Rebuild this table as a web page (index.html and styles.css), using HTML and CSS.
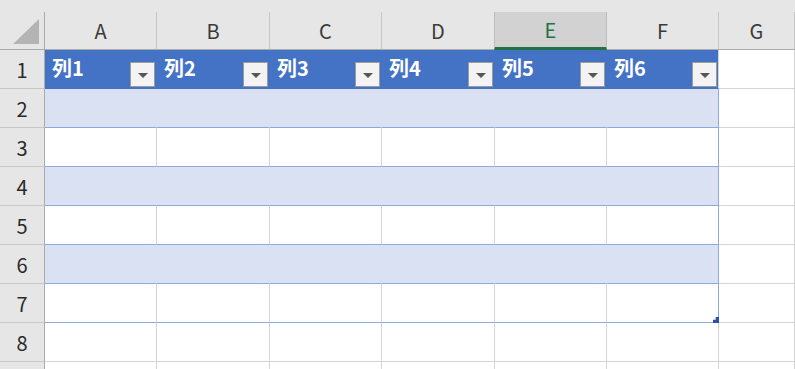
FILE: index.html
```html
<!DOCTYPE html>
<html lang="ja">
  <head>
    <meta charset="UTF-8">
    <meta name="viewport" content="width=device-width, initial-scale=1.0"/>
    <title>Sheet1</title>
    <link rel="stylesheet" href="styles.css">
  </head>
  <body>
    <div class="sheet">
      <!-- column headers -->
      <div class="corner">
        <svg width="45" height="38" viewBox="0 0 45 38"><polygon points="13,32 39,32 39,7" fill="#b4b4b4"/></svg>
      </div>
      <div class="col-head">A</div>
      <div class="col-head">B</div>
      <div class="col-head">C</div>
      <div class="col-head">D</div>
      <div class="col-head sel">E</div>
      <div class="col-head">F</div>
      <div class="col-head">G</div>

      <!-- row 1: table header -->
      <div class="row-head">1</div>
      <div class="cell th"><span>列1</span><button class="filter"></button></div>
      <div class="cell th"><span>列2</span><button class="filter"></button></div>
      <div class="cell th"><span>列3</span><button class="filter"></button></div>
      <div class="cell th"><span>列4</span><button class="filter"></button></div>
      <div class="cell th"><span>列5</span><button class="filter"></button></div>
      <div class="cell th edge"><span>列6</span><button class="filter"></button></div>
      <div class="cell"></div>

      <div class="row-head">2</div>
      <div class="cell band"></div><div class="cell band"></div><div class="cell band"></div>
      <div class="cell band"></div><div class="cell band"></div><div class="cell band edge"></div>
      <div class="cell"></div>

      <div class="row-head">3</div>
      <div class="cell plain"></div><div class="cell plain"></div><div class="cell plain"></div>
      <div class="cell plain"></div><div class="cell plain"></div><div class="cell plain edge"></div>
      <div class="cell"></div>

      <div class="row-head">4</div>
      <div class="cell band"></div><div class="cell band"></div><div class="cell band"></div>
      <div class="cell band"></div><div class="cell band"></div><div class="cell band edge"></div>
      <div class="cell"></div>

      <div class="row-head">5</div>
      <div class="cell plain"></div><div class="cell plain"></div><div class="cell plain"></div>
      <div class="cell plain"></div><div class="cell plain"></div><div class="cell plain edge"></div>
      <div class="cell"></div>

      <div class="row-head">6</div>
      <div class="cell band"></div><div class="cell band"></div><div class="cell band"></div>
      <div class="cell band"></div><div class="cell band"></div><div class="cell band edge"></div>
      <div class="cell"></div>

      <div class="row-head">7</div>
      <div class="cell plain"></div><div class="cell plain"></div><div class="cell plain"></div>
      <div class="cell plain"></div><div class="cell plain"></div>
      <div class="cell plain edge"><i class="resize"></i></div>
      <div class="cell"></div>

      <div class="row-head">8</div>
      <div class="cell"></div><div class="cell"></div><div class="cell"></div>
      <div class="cell"></div><div class="cell"></div><div class="cell"></div>
      <div class="cell"></div>

      <div class="row-head"></div>
      <div class="cell"></div><div class="cell"></div><div class="cell"></div>
      <div class="cell"></div><div class="cell"></div><div class="cell"></div>
      <div class="cell"></div>
    </div>
  </body>
</html>
```

FILE: styles.css
```css
html, body {
  margin: 0;
  height: 100%;
  overflow: hidden;
  background-color: #e6e6e6;
}
.sheet {
  display: grid;
  grid-template-columns: 45px 112px 113px 112px 113px 112px 112px 1fr;
  grid-template-rows: 38px;
  grid-auto-rows: 39px;
  padding-top: 12px;
  font-family: "Noto Sans CJK JP", "Noto Sans", sans-serif;
}
.sheet > div {
  box-sizing: border-box;
}
.corner {
  border-right: 1px solid #ababab;
  border-bottom: 1px solid #ababab;
}
.corner svg {
  display: block;
}
.col-head {
  display: flex;
  align-items: center;
  justify-content: center;
  background-color: #e6e6e6;
  color: #3a3a3a;
  font-size: 20px;
  border-right: 1px solid #c6c6c6;
  border-bottom: 1px solid #ababab;
}
.col-head.sel {
  background-color: #d2d2d2;
  color: #217346;
  border-right-color: #bcbcbc;
  border-left: 1px solid #bcbcbc;
  border-bottom: 3px solid #217346;
  margin-left: -1px;
}
.row-head {
  display: flex;
  align-items: center;
  justify-content: center;
  background-color: #e6e6e6;
  color: #2a2a2a;
  font-size: 20px;
  border-right: 1px solid #ababab;
  border-bottom: 1px solid #c6c6c6;
}
.cell {
  position: relative;
  background-color: #fff;
  border-right: 1px solid #d4d4d4;
  border-bottom: 1px solid #d4d4d4;
}
.th {
  display: flex;
  align-items: center;
  justify-content: space-between;
  padding: 0 1px 0 7px;
  background-color: #4472c4;
  border-right-color: #4472c4;
  border-bottom-color: #4472c4;
  color: #fff;
  font-size: 20px;
  font-weight: bold;
}
.th span {
  margin-top: -3px;
}
.filter {
  align-self: flex-end;
  margin-bottom: 1px;
  position: relative;
  width: 25px;
  height: 25px;
  padding: 0;
  background-color: #f3f3f3;
  border: 1px solid #9a9a9a;
  border-radius: 0;
}
.filter::after {
  content: "";
  position: absolute;
  left: 7px;
  top: 10px;
  border-left: 5px solid transparent;
  border-right: 5px solid transparent;
  border-top: 5px solid #555;
}
.band {
  background-color: #d9e1f2;
  border-right-color: #d9e1f2;
  border-bottom-color: #8ea9db;
}
.plain {
  border-bottom-color: #8ea9db;
}
.edge {
  border-right-color: #8ea9db;
}
.th.edge {
  border-right-color: #d4d4d4;
}
/* table resize grip */
.resize {
  position: absolute;
  right: -1px;
  bottom: -1px;
  width: 6px;
  height: 6px;
  background-color: #2f4fa8;
  clip-path: polygon(100% 0, 100% 100%, 0 100%, 0 45%, 45% 45%, 45% 0);
}
```
